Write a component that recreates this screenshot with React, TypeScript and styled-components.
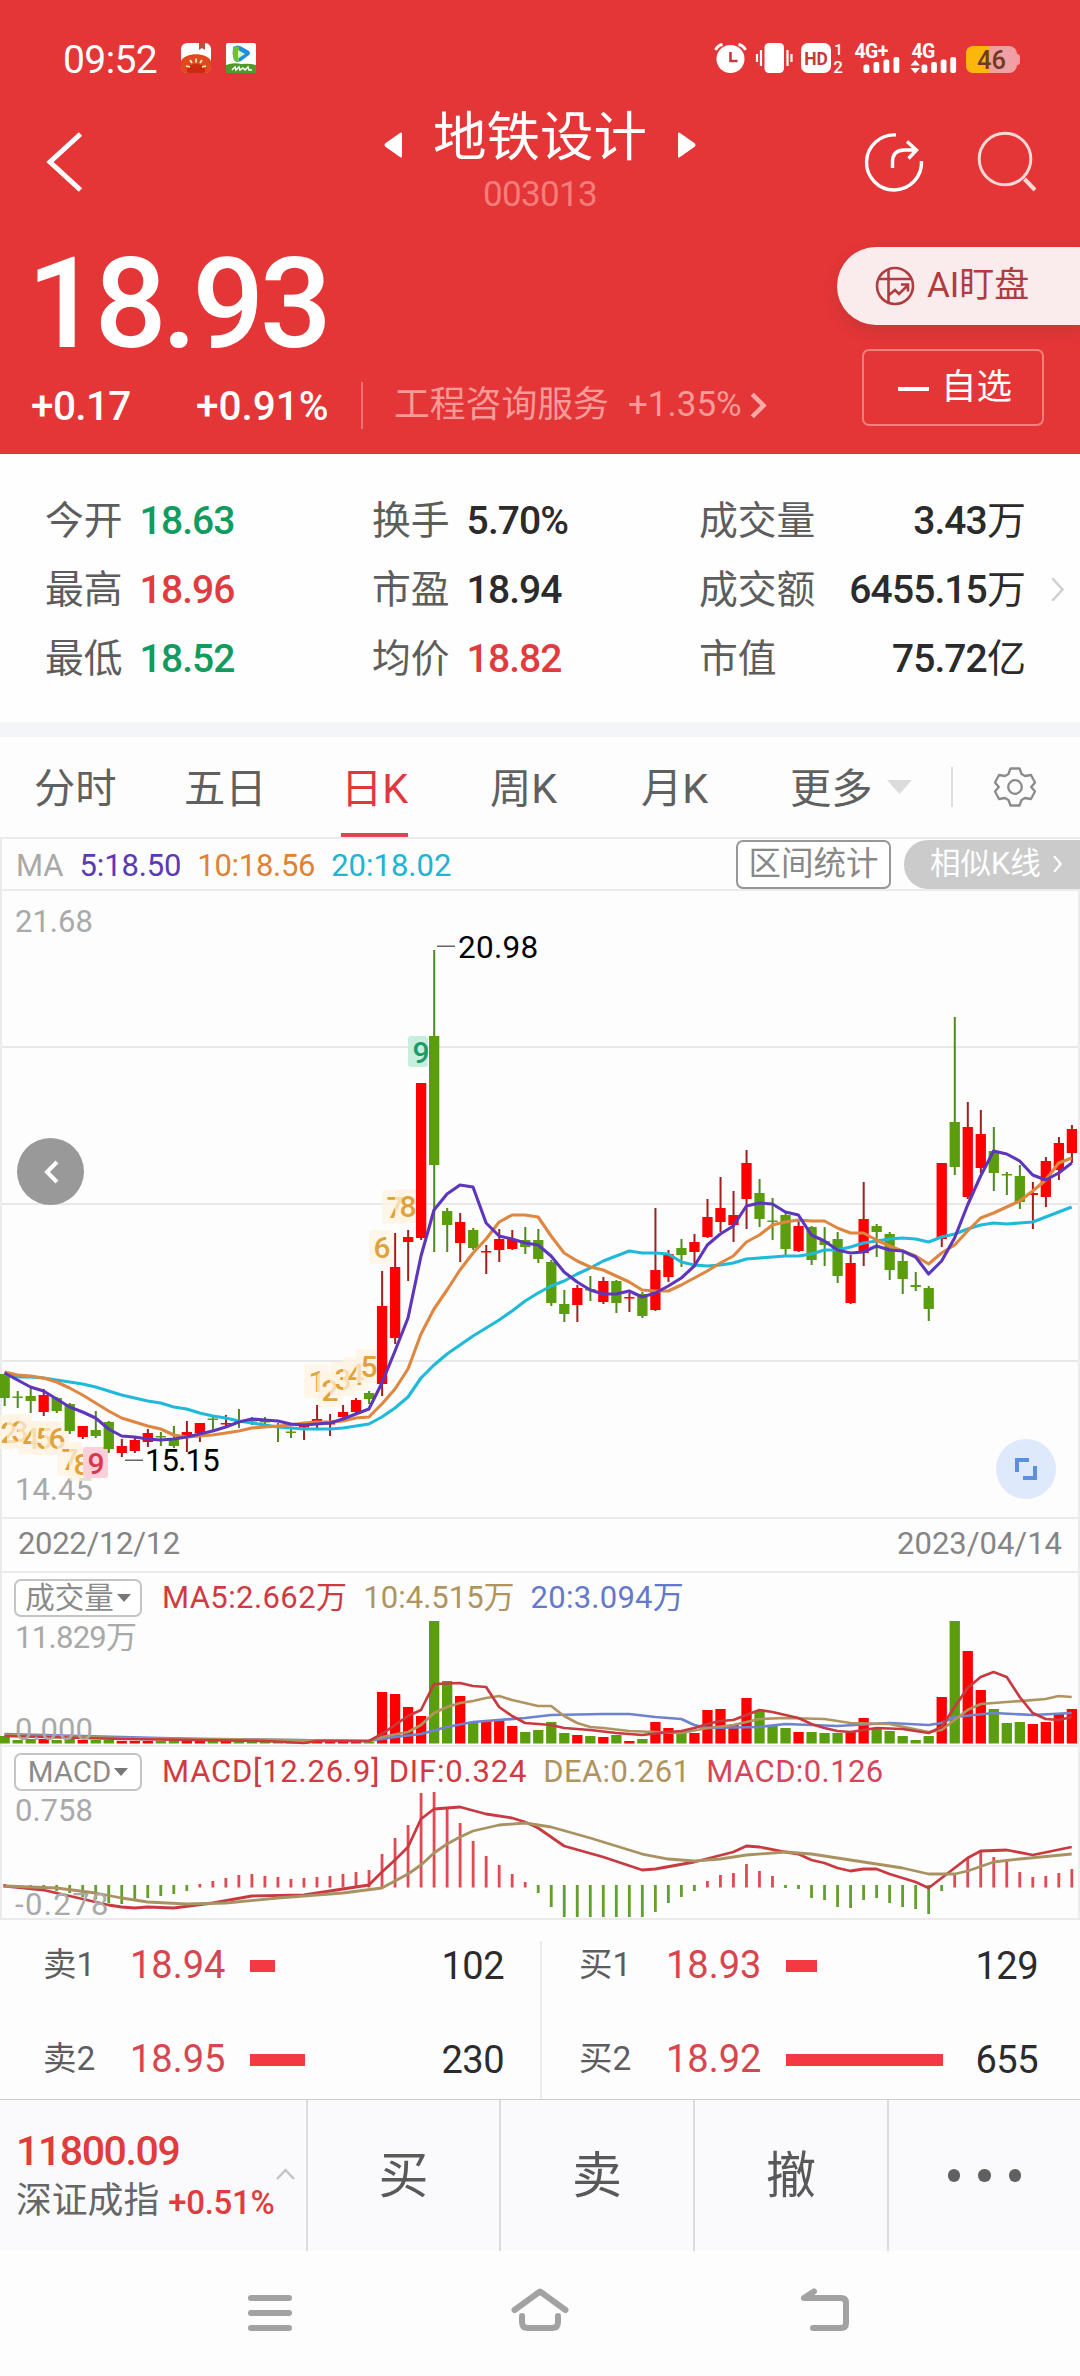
import React from "react";
import styled, { createGlobalStyle, css } from "styled-components";

const RED = "#e43537";
const UP = "#e03c3f";
const DOWN = "#119b5d";
const INK = "#2b2b2b";

const GlobalStyle = createGlobalStyle`
  * { box-sizing: border-box; }
  body { margin: 0; background: #fdfdfd; }
  #root { width: 1080px; }
`;

const Screen = styled.main`
  display: flex;
  flex-direction: column;
  width: 1080px;
  height: 2376px;
  overflow: hidden;
  background: #fdfdfd;
  font-family: Roboto, "Noto Sans CJK SC", sans-serif;
  color: ${INK};
  white-space: nowrap;
`;

interface TextProps {
  $size: number;
  $color?: string;
  $track?: number;
  $weight?: number;
  $lift?: number;
}

const Text = styled.span<TextProps>`
  display: block;
  font-size: ${(p) => p.$size}px;
  line-height: 1.2;
  font-weight: ${(p) => p.$weight ?? 400};
  letter-spacing: ${(p) => p.$track ?? 0}px;
  color: ${(p) => p.$color ?? "inherit"};
  ${(p) => p.$lift && css`margin-top: ${p.$lift}px;`}
`;

/* ---------- header ---------- */

const Header = styled.header`
  height: 454px;
  background: ${RED};
  color: #fff;
`;

const StatusBar = styled.div`
  display: flex;
  align-items: center;
  justify-content: space-between;
  height: 100px;
  padding: 16px 60px 0 63px;
`;

const StatusGroup = styled.div<{ $gap: number }>`
  display: flex;
  align-items: center;
  gap: ${(p) => p.$gap}px;
`;

const TitleBar = styled.div`
  display: grid;
  grid-template-columns: 384px 312px 1fr;
  align-items: center;
  height: 124px;
`;

const BackButton = styled.button`
  border: 0;
  padding: 0 0 0 44px;
  background: none;
  line-height: 0;
  text-align: left;
`;

const TitleGroup = styled.div`
  display: grid;
  grid-template-columns: 18px 1fr 18px;
  justify-items: center;
`;

const Arrow = styled.svg`
  margin-top: 25px;
`;

const TitleText = styled.h1`
  margin: 0;
  padding-top: 2px;
  font-size: 53.5px;
  line-height: 60px;
  height: 64px;
  font-weight: 400;
`;

const Code = styled.div`
  grid-column: 1 / -1;
  height: 48px;
  font-size: 35px;
  line-height: 50px;
  letter-spacing: -0.7px;
  color: #f57e7c;
`;

const TitleActions = styled.div`
  display: flex;
  justify-content: flex-end;
  gap: 52px;
  padding-right: 42px;
`;

const Quote = styled.section`
  display: flex;
  justify-content: space-between;
`;

const Price = styled.div`
  height: 156px;
  padding: 2px 0 0 27px;
  font-size: 127px;
  line-height: 156px;
  font-weight: 500;
  letter-spacing: -4.8px;
`;

const ChangeRow = styled.div`
  display: grid;
  grid-template-columns: 165px 165px 33px 234px 122px 18px;
  align-items: center;
  height: 48px;
  padding-left: 31px;
`;

const Rule = styled.i<{ $h: number; $color: string }>`
  display: block;
  width: 2px;
  height: ${(p) => p.$h}px;
  background: ${(p) => p.$color};
`;

const QuoteActions = styled.div`
  display: flex;
  flex-direction: column;
  align-items: flex-end;
  gap: 24px;
  padding-top: 23px;
`;

const WatchPill = styled.button`
  display: flex;
  align-items: center;
  gap: 12px;
  width: 243px;
  height: 78px;
  padding: 0 0 0 38px;
  border: 0;
  border-radius: 39px 0 0 39px;
  background: #faebec;
  box-shadow: 0 6px 14px rgba(150, 60, 50, 0.3);
  font-family: inherit;
  color: #b03c3f;
`;

const FavButton = styled.button`
  display: flex;
  align-items: center;
  gap: 12px;
  width: 182px;
  height: 77px;
  margin-right: 36px;
  padding: 0 0 0 34px;
  border: 2px solid #f3807e;
  border-radius: 7px;
  background: none;
  font-family: inherit;
  color: #fff;
`;

const Dash = styled.i`
  width: 31px;
  height: 4px;
  margin-top: 3px;
  background: #fff;
`;

/* ---------- stats ---------- */

const Stats = styled.section`
  display: grid;
  grid-template-columns: 327px 327px 326px 1fr;
  grid-template-rows: repeat(3, 69px);
  align-items: center;
  height: 268px;
  padding: 32px 0 0 45px;
  background: #fefefe;
`;

const Stat = styled.dl<{ $spread?: boolean }>`
  display: flex;
  align-items: center;
  gap: 17px;
  margin: 0;
  ${(p) => p.$spread && css`justify-content: space-between; gap: 0;`}
`;

const StatLabel = styled.dt`
  font-size: 38.8px;
  line-height: 46px;
  color: #5d5d5d;
`;

const StatValue = styled.dd<{ $color?: string }>`
  margin: 0;
  font-size: 39px;
  line-height: 46px;
  font-weight: 500;
  letter-spacing: -0.9px;
  color: ${(p) => p.$color ?? INK};
`;

const Unit = styled.span`
  font-weight: 400;
`;

const StatEnd = styled.div`
  display: flex;
  padding-left: 26px;
`;

const Gap = styled.div`
  height: 15px;
  background: #f4f5f8;
`;

/* ---------- tabs ---------- */

const Tabs = styled.nav`
  display: grid;
  grid-template-columns: 150px 157px 149px 151px 149px 97px 64px 43px 1fr;
  height: 100px;
  padding-left: 34px;
  align-items: stretch;
`;

const Tab = styled.div<{ $active?: boolean }>`
  display: flex;
  flex-direction: column;
  justify-content: space-between;
  width: max-content;
  padding-top: 27px;
  font-size: 41.3px;
  line-height: 50px;
  color: ${(p) => (p.$active ? "#e0383f" : "#606060")};
  &::after {
    content: "";
    height: 4px;
    background: ${(p) => (p.$active ? "#d94850" : "transparent")};
  }
`;

const TabAside = styled.div`
  display: flex;
  align-items: center;
`;

/* ---------- chart panes ---------- */

const Legend = styled.div`
  display: flex;
  align-items: center;
  height: 52px;
  padding-left: 14px;
  border-top: 2px solid #ebebeb;
  border-left: 2px solid #ebebeb;
`;

const LegendItems = styled.div`
  display: flex;
  flex: 1;
  gap: 16px;
`;

const RangeButton = styled.button`
  width: 155px;
  height: 49px;
  padding: 0;
  border: 2px solid #979797;
  border-radius: 7px;
  background: #fff;
  font: 32.5px/44px Roboto, "Noto Sans CJK SC", sans-serif;
  color: #888;
`;

const SimilarButton = styled.button`
  display: flex;
  align-items: center;
  gap: 12px;
  width: 176px;
  height: 49px;
  margin-left: 13px;
  padding: 0 0 0 26px;
  border: 0;
  border-radius: 24px 0 0 24px;
  background: #cbcbcb;
  font: 30.5px/44px Roboto, "Noto Sans CJK SC", sans-serif;
  color: #fff;
`;

const Pane = styled.section<{ $h: number }>`
  position: relative;
  height: ${(p) => p.$h}px;
  border-top: 2px solid #ebebeb;
  border-left: 2px solid #ebebeb;
  border-right: 2px solid #ededed;
`;

const Plot = styled.svg`
  position: absolute;
  left: -2px;
  top: -2px;
`;

const PaneHead = styled.div`
  position: relative;
  display: flex;
  align-items: center;
  height: 36px;
  margin: 7px 0 0 12px;
`;

const Picker = styled.button`
  display: flex;
  align-items: center;
  justify-content: center;
  gap: 3px;
  width: 128px;
  height: 38px;
  margin-right: 20px;
  padding: 0;
  border: 2px solid #c4c4c4;
  border-radius: 7px;
  background: #fff;
  font: 29.5px/32px Roboto, "Noto Sans CJK SC", sans-serif;
  color: #8b8b8b;
`;

const AxisMark = styled.span<{ $y: number; $track?: number }>`
  position: absolute;
  left: 13px;
  top: ${(p) => p.$y}px;
  font-size: 31px;
  line-height: 36px;
  letter-spacing: ${(p) => p.$track ?? 0}px;
  color: #a9a9a9;
`;

const RoundButton = styled.button<{ $x: number; $y: number; $d: number; $bg: string }>`
  position: absolute;
  left: ${(p) => p.$x}px;
  top: ${(p) => p.$y}px;
  display: grid;
  place-items: center;
  width: ${(p) => p.$d}px;
  height: ${(p) => p.$d}px;
  padding: 0;
  border: 0;
  border-radius: 50%;
  background: ${(p) => p.$bg};
`;

const Dates = styled.div`
  display: flex;
  justify-content: space-between;
  align-items: center;
  height: 54px;
  padding: 0 16px 2px 16px;
  border: solid #ebebeb;
  border-width: 2px 2px 0 2px;
`;

/* ---------- order book ---------- */

const Book = styled.section`
  display: grid;
  grid-template-columns: 540px 540px;
  height: 181px;
  padding-top: 21px;
  border-top: 2px solid #ebebeb;
`;

const BookSide = styled.div<{ $line?: boolean }>`
  display: flex;
  flex-direction: column;
  padding-left: ${(p) => (p.$line ? 37 : 43)}px;
  border-left: ${(p) => (p.$line ? "2px solid #ebebeb" : "0")};
`;

const BookRow = styled.div`
  display: grid;
  grid-template-columns: 87px 120px 160px 1fr;
  align-items: center;
  height: 49px;
  & + & { margin-top: 45px; }
`;

const DepthBar = styled.i`
  display: block;
  height: 12px;
  background: #f33a42;
`;

const Lots = styled.span<{ $right: number }>`
  padding-right: ${(p) => p.$right}px;
  text-align: right;
  font-size: 38px;
  letter-spacing: -0.5px;
`;

/* ---------- footer ---------- */

const Footer = styled.footer`
  display: grid;
  grid-template-columns: 306px 193px 194px 194px 193px;
  height: 152px;
  border-top: 1px solid #cfcfcf;
  background: #fafafc;
`;

const IndexCell = styled.div`
  position: relative;
  display: flex;
  flex-direction: column;
  gap: 4px;
  padding: 27px 0 0 16px;
`;

const IndexLine = styled.div`
  display: flex;
  align-items: center;
  gap: 9px;
`;

const Caret = styled.svg`
  position: absolute;
  left: 276px;
  top: 68px;
`;

const Action = styled.button`
  display: flex;
  align-items: center;
  justify-content: center;
  gap: 18px;
  padding: 0;
  border: 0;
  border-left: 2px solid #dcdcdc;
  background: none;
  font: 50px/60px Roboto, "Noto Sans CJK SC", sans-serif;
  color: #595959;
`;

const Dot = styled.i`
  width: 12.5px;
  height: 12.5px;
  border-radius: 50%;
  background: #606060;
`;

const SystemNav = styled.div`
  display: flex;
  justify-content: center;
  height: 125px;
  padding-top: 35px;
`;

/* ---------- data ---------- */

// direction, body top, body bottom, high, low
type Candle = ["r" | "g", number, number, number, number];

const candles: Candle[] = [
  ["g", 1374, 1398, 1374, 1406], ["g", 1396.5, 1398, 1391, 1408], ["g", 1396, 1401, 1387, 1413],
  ["r", 1395, 1412, 1389, 1416], ["g", 1398, 1411, 1397, 1413], ["g", 1404, 1431, 1403, 1434],
  ["r", 1426, 1437, 1426, 1439], ["g", 1430, 1436, 1411, 1438], ["g", 1422, 1449, 1421, 1453],
  ["r", 1446, 1453, 1439, 1457], ["r", 1440, 1451, 1436, 1453], ["r", 1433, 1442, 1429, 1447],
  ["g", 1436, 1437.5, 1432, 1446], ["g", 1439, 1446, 1426, 1448], ["r", 1432, 1437, 1421, 1452],
  ["r", 1423, 1433, 1423, 1442], ["g", 1418.5, 1420, 1417, 1432], ["r", 1423, 1424.5, 1415, 1428],
  ["g", 1420, 1421.5, 1409, 1428], ["g", 1420, 1421.5, 1417, 1425], ["g", 1421, 1422.5, 1417, 1424],
  ["g", 1425, 1426.5, 1423, 1442], ["g", 1431.5, 1433, 1428, 1438], ["r", 1426, 1427.5, 1425, 1440],
  ["r", 1419, 1421, 1405, 1428], ["r", 1423, 1424.5, 1414, 1436], ["r", 1412, 1417, 1405, 1418],
  ["r", 1400, 1412, 1398, 1413], ["g", 1393, 1399, 1391, 1404], ["r", 1306, 1384, 1271, 1396],
  ["r", 1267, 1338, 1233, 1344], ["r", 1237, 1242, 1230, 1281], ["r", 1083, 1238, 1083, 1240],
  ["g", 1036, 1165, 950, 1252], ["g", 1211, 1225, 1208, 1252], ["r", 1222, 1243, 1213, 1262],
  ["g", 1230, 1248, 1228, 1250], ["r", 1251, 1252.5, 1245, 1274], ["r", 1239, 1250, 1229, 1262],
  ["r", 1239, 1249, 1230, 1250], ["g", 1240, 1247, 1227, 1254], ["g", 1240, 1259, 1229, 1263],
  ["g", 1262, 1303, 1260, 1306], ["g", 1304, 1314, 1290, 1322], ["r", 1288, 1305, 1285, 1322],
  ["g", 1289, 1290.5, 1276, 1301], ["r", 1281, 1302, 1277, 1304], ["g", 1281, 1303, 1280, 1313],
  ["r", 1297, 1298.5, 1293, 1312], ["g", 1294, 1316, 1292, 1318], ["r", 1270, 1310, 1208, 1311],
  ["r", 1254, 1277, 1250, 1282], ["g", 1248, 1255, 1239, 1267], ["r", 1242, 1252, 1234, 1267],
  ["r", 1217, 1237, 1199, 1238], ["r", 1208, 1222, 1177, 1232], ["r", 1215, 1225, 1191, 1242],
  ["r", 1163, 1199, 1150, 1229], ["g", 1193, 1219, 1179, 1227], ["g", 1220.5, 1222, 1198, 1240],
  ["g", 1215, 1249, 1213, 1255], ["r", 1226, 1251, 1221, 1252], ["g", 1227, 1260, 1226, 1265],
  ["g", 1241, 1245, 1227, 1266], ["g", 1239, 1276, 1232, 1283], ["r", 1263, 1303, 1255, 1304],
  ["r", 1219, 1253, 1182, 1266], ["g", 1226, 1232, 1224, 1257], ["g", 1234, 1270, 1232, 1280],
  ["g", 1261, 1279, 1253, 1294], ["g", 1285, 1287, 1272, 1291], ["g", 1288, 1309, 1286, 1321],
  ["r", 1163, 1239, 1163, 1247], ["g", 1122, 1167, 1017, 1175], ["r", 1127, 1197, 1102, 1199],
  ["r", 1134, 1168, 1110, 1173], ["g", 1151, 1173, 1127, 1191], ["g", 1174, 1175.5, 1172, 1195],
  ["g", 1176, 1202, 1165, 1209], ["r", 1193, 1195, 1182, 1229], ["r", 1161, 1197, 1157, 1207],
  ["r", 1143, 1170, 1137, 1180], ["r", 1129, 1153, 1125, 1163],
];

const ma5 = [
  1373, 1380, 1387, 1391, 1399, 1407, 1412, 1418, 1429, 1436, 1437, 1439, 1440, 1439, 1437, 1434, 1431, 1427, 1422,
  1419, 1420, 1421, 1424, 1425, 1424, 1423, 1419, 1414, 1409, 1383, 1351, 1318, 1256, 1210, 1194, 1185, 1187, 1223,
  1236, 1239, 1243, 1245, 1256, 1272, 1282, 1290, 1294, 1294, 1291, 1297, 1293, 1286, 1278, 1266, 1245, 1234, 1226,
  1206, 1203, 1204, 1212, 1215, 1235, 1241, 1250, 1253, 1252, 1246, 1250, 1251, 1257, 1274, 1261, 1238, 1205, 1176,
  1151, 1154, 1161, 1175, 1180, 1173, 1163,
];

const ma10 = [
  1372, 1375, 1376, 1378, 1382, 1388, 1395, 1403, 1411, 1418, 1422, 1426, 1429, 1435, 1437, 1436, 1435, 1433, 1431,
  1428, 1427, 1426, 1425, 1423, 1422, 1422, 1421, 1418, 1417, 1404, 1389, 1369, 1334, 1309, 1290, 1270, 1253, 1239,
  1222, 1215, 1215, 1217, 1236, 1253, 1261, 1267, 1270, 1276, 1282, 1290, 1291, 1291, 1285, 1278, 1271, 1263, 1256,
  1242, 1235, 1225, 1222, 1220, 1221, 1221, 1228, 1233, 1233, 1240, 1246, 1251, 1256, 1264, 1253, 1245, 1231, 1218,
  1213, 1207, 1201, 1191, 1180, 1163, 1158,
];

const ma20 = [
  1374, 1377, 1377, 1378, 1380, 1382, 1384, 1387, 1391, 1395, 1398, 1401, 1403, 1407, 1409, 1413, 1416, 1418, 1421,
  1423, 1425, 1427, 1428, 1429, 1429, 1429, 1428, 1426, 1424, 1417, 1408, 1397, 1378, 1365, 1354, 1345, 1336, 1328,
  1320, 1311, 1301, 1293, 1286, 1281, 1274, 1268, 1261, 1256, 1251, 1253, 1253, 1254, 1262, 1265, 1266, 1265, 1263,
  1259, 1258, 1257, 1256, 1256, 1254, 1250, 1250, 1247, 1243, 1241, 1239, 1238, 1239, 1242, 1237, 1234, 1229, 1225,
  1223, 1224, 1223, 1222, 1217, 1212, 1207,
];

const volumeTops = [
  1736, 1740, 1739, 1739, 1740, 1739, 1740, 1740, 1740, 1741, 1741, 1741, 1741, 1741, 1741, 1741, 1741, 1741, 1742,
  1742, 1742, 1742, 1742, 1742, 1742, 1742, 1742, 1742, 1742, 1692, 1694, 1707, 1716, 1621, 1681, 1696, 1722, 1721,
  1720, 1726, 1732, 1730, 1722, 1733, 1735, 1736, 1737, 1735, 1741, 1739, 1722, 1728, 1733, 1733, 1710, 1709, 1725,
  1698, 1711, 1726, 1728, 1732, 1732, 1733, 1733, 1731, 1718, 1729, 1731, 1736, 1740, 1736, 1697, 1621, 1651, 1690,
  1709, 1723, 1722, 1724, 1722, 1713, 1709,
];

type Point = [number, number];

const volMa5: Point[] = [
  [0, 1736], [9, 1739], [20, 1741], [23, 1743], [24, 1741], [28, 1741], [29, 1734], [30, 1725], [31, 1716], [32, 1710],
  [33, 1684], [35, 1683], [36, 1686], [37, 1687], [38, 1707], [39, 1716], [40, 1723], [42, 1725], [43, 1728], [45, 1730],
  [47, 1733], [49, 1735], [51, 1732], [52, 1731], [53, 1728], [54, 1724], [55, 1721], [56, 1720], [57, 1715], [58, 1710],
  [59, 1712], [61, 1718], [62, 1724], [63, 1728], [64, 1731], [65, 1732], [67, 1728], [69, 1729], [70, 1731], [71, 1733],
  [72, 1727], [73, 1707], [74, 1688], [75, 1677], [76, 1672], [77, 1677], [78, 1697], [79, 1713], [80, 1719], [81, 1720],
  [82, 1717],
];
const volMa10: Point[] = [
  [0, 1735], [9, 1738], [28, 1741], [29, 1737], [31, 1732], [32, 1725], [33, 1713], [34, 1707], [35, 1703], [36, 1701],
  [37, 1698], [38, 1696], [39, 1700], [41, 1706], [42, 1706], [43, 1716], [44, 1723], [45, 1727], [46, 1728], [48, 1731],
  [50, 1732], [52, 1733], [54, 1728], [56, 1725], [58, 1719], [60, 1718], [63, 1719], [65, 1723], [68, 1724], [71, 1732],
  [72, 1730], [73, 1720], [74, 1710], [75, 1704], [77, 1702], [80, 1699], [81, 1696], [82, 1697],
];
const volMa20: Point[] = [
  [0, 1734], [9, 1737], [15, 1739], [28, 1741], [30, 1737], [32, 1734], [34, 1727], [36, 1722], [40, 1718], [42, 1715],
  [46, 1714], [48, 1714], [50, 1717], [52, 1719], [53, 1725], [54, 1728], [58, 1727], [60, 1724], [64, 1726], [68, 1723],
  [71, 1725], [72, 1723], [73, 1717], [76, 1713], [79, 1715], [82, 1713],
];

const macdEnds = [
  1884, 1888, 1890, 1890, 1891, 1893, 1897, 1899, 1903, 1904, 1901, 1898, 1896, 1894, 1891, 1884, 1881, 1878, 1875,
  1874, 1876, 1877, 1879, 1878, 1877, 1876, 1874, 1872, 1870, 1854, 1838, 1825, 1793, 1792, 1808, 1823, 1841, 1856,
  1865, 1874, 1882, 1893, 1907, 1917, 1917, 1917, 1917, 1917, 1917, 1917, 1912, 1903, 1897, 1891, 1881, 1875, 1873,
  1864, 1871, 1876, 1888, 1889, 1898, 1900, 1907, 1908, 1900, 1898, 1903, 1907, 1909, 1914, 1891, 1874, 1858, 1852,
  1857, 1861, 1872, 1877, 1876, 1873, 1869,
];
const dif: Point[] = [
  [0, 1886], [3, 1890], [5, 1896], [7, 1902], [8, 1905], [9, 1907], [10, 1908], [11, 1907], [13, 1908], [16, 1903],
  [19, 1896], [23, 1895], [25, 1891], [28, 1885], [29, 1872], [30, 1860], [31, 1847], [32, 1819], [33, 1809], [34, 1808],
  [35, 1807], [37, 1814], [39, 1818], [40, 1822], [41, 1828], [42, 1837], [43, 1846], [46, 1857], [49, 1870], [50, 1869],
  [53, 1862], [56, 1852], [57, 1846], [58, 1847], [60, 1852], [61, 1854], [62, 1860], [63, 1863], [64, 1868], [65, 1871],
  [66, 1869], [67, 1869], [68, 1874], [70, 1882], [71, 1888], [72, 1878], [73, 1868], [74, 1858], [75, 1851], [77, 1850],
  [79, 1855], [82, 1847],
];
const dea: Point[] = [
  [0, 1886], [4, 1888], [7, 1893], [9, 1898], [11, 1902], [14, 1904], [17, 1903], [21, 1898], [26, 1893], [29, 1888],
  [31, 1874], [32, 1865], [33, 1853], [34, 1844], [35, 1837], [36, 1831], [38, 1825], [40, 1823], [42, 1827], [45, 1838],
  [49, 1854], [51, 1859], [53, 1861], [55, 1859], [57, 1855], [60, 1852], [62, 1854], [66, 1862], [69, 1868], [71, 1874],
  [73, 1874], [74, 1871], [76, 1862], [78, 1859], [82, 1854],
];

// digit, x, y, kind
const countMarks: [string, number, number, "n" | "r" | "g"][] = [
  ["2", 9, 1432, "n"], ["3", 20, 1431, "n"], ["4", 31, 1438, "n"], ["5", 44, 1438, "n"], ["6", 57, 1438, "n"],
  ["7", 70, 1459, "n"], ["8", 82, 1464, "n"], ["9", 96, 1463, "r"],
  ["1", 317, 1381, "n"], ["2", 330, 1390, "n"], ["3", 343, 1379, "n"], ["4", 356, 1374, "n"], ["5", 369, 1366, "n"],
  ["6", 382, 1247, "n"], ["7", 395, 1207, "n"], ["8", 408, 1206, "n"], ["9", 421, 1052, "g"],
];
const markColor = { n: "#dfa23c", r: "#d63a52", g: "#1b9c68" };
const markBack = { n: "#fff3e2", r: "#fbd0d8", g: "#c8eedd" };

const sx = (i: number) => 4.5 + 13.015 * i;
const dense = (ys: number[]) => ys.map((y, i) => `${sx(i).toFixed(1)},${y}`).join(" ");
const sparse = (ps: Point[]) => ps.map(([i, y]) => `${sx(i).toFixed(1)},${y}`).join(" ");

const Line = ({ points, color, width = 3.1 }: { points: string; color: string; width?: number }) => (
  <polyline points={points} fill="none" stroke={color} strokeWidth={width} strokeLinejoin="round" />
);

const PricePlot = () => (
  <Plot width="1080" height="628" viewBox="0 889 1080 628">
    {[1047, 1204, 1361].map((y) => (
      <rect key={y} x="2" y={y - 1} width="1076" height="2" fill="#e8e8e8" />
    ))}
    <text x="15" y="932" fontSize="31" fill="#a9a9a9">21.68</text>
    <text x="15" y="1500" fontSize="31" fill="#a9a9a9">14.45</text>
    {countMarks.map(([d, x, y, k], n) => (
      <g key={n}>
        <rect
          x={x - 13}
          y={y - (k === "n" ? 17 : 16)}
          width={k === "g" ? 20 : 25}
          height={k === "n" ? 34 : 31}
          rx="3"
          fill={markBack[k]}
          opacity={k === "n" ? 0.72 : 1}
        />
        <text x={x} y={y + 11} fontSize="30" fontWeight="500" textAnchor="middle" fill={markColor[k]}>{d}</text>
      </g>
    ))}
    {candles.map(([c, top, bottom, high, low], i) => (
      <g key={i}>
        <rect x={sx(i) - 0.8} y={high} width="2" height={low - high} fill={c === "r" ? "#a02020" : "#4e8a1c"} />
        <rect x={sx(i) - 5} y={top} width="10.3" height={bottom - top} fill={c === "r" ? "#fe0000" : "#5a9e0e"} />
      </g>
    ))}
    <Line points={dense(ma20)} color="#1fbad9" />
    <Line points={dense(ma10)} color="#df8640" />
    <Line points={dense(ma5)} color="#5d36bb" />
    <rect x="437" y="945.5" width="18" height="1.5" fill="#666" />
    <text x="458" y="958" fontSize="31.5" fill="#000" letterSpacing="0.3">20.98</text>
    <rect x="125" y="1459.5" width="18" height="1.5" fill="#666" />
    <text x="145" y="1471" fontSize="31" fill="#000" letterSpacing="-0.8">15.15</text>
  </Plot>
);

const VolumePlot = () => (
  <Plot width="1080" height="174" viewBox="0 1571 1080 174">
    {volumeTops.map((y, i) => (
      <rect key={i} x={sx(i) - 5} y={y} width="10.3" height={1743.5 - y} fill={candles[i][0] === "r" ? "#fe0000" : "#5a9e0e"} />
    ))}
    <Line points={sparse(volMa20)} color="#6d83d0" width={2.7} />
    <Line points={sparse(volMa10)} color="#b09460" width={2.7} />
    <Line points={sparse(volMa5)} color="#c63a40" width={2.7} />
  </Plot>
);

const MacdPlot = () => (
  <Plot width="1080" height="173" viewBox="0 1745 1080 173">
    {macdEnds.map((y, i) => {
      const up = y < 1886;
      return (
        <rect
          key={i}
          x={sx(i) - 1.3}
          y={up ? y : 1885}
          width="2.8"
          height={up ? 1887.5 - y : y - 1885}
          fill={up ? "#e04a55" : "#639f2c"}
        />
      );
    })}
    <Line points={sparse(dif)} color="#c93a40" width={2.8} />
    <Line points={sparse(dea)} color="#a99262" width={2.8} />
  </Plot>
);

/* ---------- icons ---------- */

const TomatoIcon = () => (
  <svg width="30" height="30" viewBox="0 0 30 30">
    <rect width="30" height="30" rx="6" fill="#fff" />
    <path d="M18 0h6v7l-3-2-3 2z" fill="#b9503c" />
    <path d="M0 18C4 9 26 9 30 18v6q0 6-6 6H6q-6 0-6-6z" fill="#e0491c" />
    <ellipse cx="15" cy="27" rx="9" ry="6" fill="#c92a10" />
    <path d="M15 15.500v4M9 17l2 3M21 17l-2 3M5 23l4 1M25 23l-4 1" stroke="#fff0d0" strokeWidth="1.7" />
  </svg>
);

const VideoIcon = () => (
  <svg width="30" height="30" viewBox="0 0 30 30">
    <rect width="30" height="30" rx="2" fill="#fff" />
    <path d="M7 4q5-3 9 0l7 4q2 2.500 0 4l-8 6q-5 2-7-1-2-6-1-13z" fill="#1f8fe0" />
    <path d="M7 5q2-3 6-1v14q-3 2-5-1-2-6-1-12z" fill="#6fc12e" />
    <path d="M12 7l7 4-7 4.500z" fill="#d8f7c0" />
    <path d="M0 22q7-3 15-1 8-1 15 1v8H0z" fill="#4f9a28" />
    <path d="M6 27l3-3 1 3 3-3 1 3 3-2 2 2 3-3 1 3h3" stroke="#fff" strokeWidth="1.5" fill="none" />
  </svg>
);

const StatusIcons = () => (
  <svg width="307" height="34" viewBox="713 41 307 34" fill="#fff">
    <circle cx="730.500" cy="59" r="14" />
    <path d="M715.500 50q2-4.500 7-5.500M745.500 50q-2-4.500-7-5.500" stroke="#fff" strokeWidth="3" fill="none" />
    <path d="M730.500 52v9h7" stroke="#c23a3c" strokeWidth="2.600" fill="none" />
    <rect x="764.500" y="43" width="19.500" height="30" rx="4.500" />
    <path d="M761 50v16M757 54v8M787.500 50v16M791.500 54v8" stroke="#fff" strokeWidth="2.200" />
    <rect x="801" y="43" width="30" height="30" rx="7" />
    <text x="816" y="64.500" fontSize="17.500" fontWeight="700" textAnchor="middle" fill="#c23a3c">HD</text>
    <text x="838.500" y="54.500" fontSize="15" fontWeight="500" textAnchor="middle">1</text>
    <text x="838" y="73" fontSize="17" fontWeight="500" textAnchor="middle">2</text>
    <text x="854.500" y="57.500" fontSize="19.500" fontWeight="700" letterSpacing="-0.600">4G+</text>
    <text x="911.500" y="57.500" fontSize="19.500" fontWeight="700" letterSpacing="-0.600">4G</text>
    {[0, 1, 2, 3].map((n) => (
      <rect key={n} x={863.5 + n * 10} y={64.5 - n * 2.5} width="5.8" height={8.5 + n * 2.5} rx="2" />
    ))}
    {[0, 1, 2, 3].map((n) => (
      <rect key={n} x={921.5 + n * 9.6} y={64.5 - n * 2.5} width="5.8" height={8.5 + n * 2.5} rx="2" />
    ))}
    <path d="M910.500 65.500l4.700-5.500 4.700 5.500zM910.500 68l4.700 5.500 4.700-5.500z" />
    <rect x="966" y="46" width="51" height="27" rx="8" fill="#f0a0a4" />
    <rect x="1014" y="54" width="6" height="11" rx="3" fill="#f0a0a4" />
    <path d="M974 46h15v27h-15q-8 0-8-8V54q0-8 8-8z" fill="#fdb70b" />
    <text x="991.500" y="68.500" fontSize="25.500" textAnchor="middle" fill="#6e3b22" fontWeight="500">46</text>
  </svg>
);

const GearIcon = () => (
  <svg width="42" height="42" viewBox="-21 -21 42 42" fill="none" stroke="#8b8b8b" strokeWidth="2.300" strokeLinejoin="round">
    <path d="M-4.500-18.500h9l2 5.500 3.500 2 6-1 4 7.500-3.800 4.500 3.800 4.500-4 7.500-6-1-3.500 2-2 5.500h-9l-2-5.500-3.500-2-6 1-4-7.500 3.800-4.500-3.800-4.500 4-7.500 6 1 3.500-2z" />
    <circle r="6.800" />
  </svg>
);

const Chevron = ({ w, h, color, stroke }: { w: number; h: number; color: string; stroke: number }) => (
  <svg width={w} height={h} viewBox={`0 0 ${w} ${h}`} fill="none" stroke={color} strokeWidth={stroke}>
    <path d={`M${stroke / 2} ${stroke / 2}L${w - stroke} ${h / 2}L${stroke / 2} ${h - stroke / 2}`} />
  </svg>
);

const DownMark = ({ w, h, color }: { w: number; h: number; color: string }) => (
  <svg width={w} height={h} viewBox={`0 0 ${w} ${h}`}>
    <path d={`M0 0H${w}L${w / 2} ${h}Z`} fill={color} />
  </svg>
);

/* ---------- page ---------- */

interface StatItem {
  label: string;
  value: string;
  unit?: string;
  color?: string;
}

const stats: StatItem[][] = [
  [{ label: "今开", value: "18.63", color: DOWN }, { label: "换手", value: "5.70%" }, { label: "成交量", value: "3.43", unit: "万" }],
  [{ label: "最高", value: "18.96", color: UP }, { label: "市盈", value: "18.94" }, { label: "成交额", value: "6455.15", unit: "万" }],
  [{ label: "最低", value: "18.52", color: DOWN }, { label: "均价", value: "18.82", color: UP }, { label: "市值", value: "75.72", unit: "亿" }],
];

const asks = [
  { label: "卖1", price: "18.94", bar: 25, lots: 102 },
  { label: "卖2", price: "18.95", bar: 55, lots: 230 },
];
const bids = [
  { label: "买1", price: "18.93", bar: 31, lots: 129 },
  { label: "买2", price: "18.92", bar: 157, lots: 655 },
];

const BookRows = ({ rows, right }: { rows: typeof asks; right: number }) => (
  <>
    {rows.map((r) => (
      <BookRow key={r.label}>
        <Text $size={33.5} $color="#5d5d5d">{r.label}</Text>
        <Text $size={38} $color="#d9454e">{r.price}</Text>
        <DepthBar style={{ width: r.bar }} />
        <Lots $right={right}>{r.lots}</Lots>
      </BookRow>
    ))}
  </>
);

export default function App() {
  return (
    <Screen>
      <GlobalStyle />
      <Header>
        <StatusBar>
          <StatusGroup $gap={24}>
            <Text $size={39} $track={-0.6} $lift={4}>09:52</Text>
            <StatusGroup $gap={15}>
              <TomatoIcon />
              <VideoIcon />
            </StatusGroup>
          </StatusGroup>
          <StatusIcons />
        </StatusBar>
        <TitleBar>
          <BackButton>
            <svg width="40" height="62" viewBox="0 0 40 62" fill="none" stroke="#fff" strokeWidth="5">
              <path d="M36.500 3L6 31l30.500 28" />
            </svg>
          </BackButton>
          <TitleGroup>
            <Arrow width="18" height="28" viewBox="0 0 18 28" fill="#fff"><path d="M18 2v24q-1 1-2 0L1 15.500q-1-1.500 0-3L16 2q1-1 2 0z" /></Arrow>
            <TitleText>地铁设计</TitleText>
            <Arrow width="18" height="28" viewBox="0 0 18 28" fill="#fff"><path d="M0 2v24q1 1 2 0L17 15.500q1-1.500 0-3L2 2Q1 1 0 2z" /></Arrow>
            <Code>003013</Code>
          </TitleGroup>
          <TitleActions>
            <svg width="60" height="62" viewBox="864 131 60 62" fill="none" stroke="#fff" strokeWidth="3.400">
              <path d="M896 135a27.500 27.500 0 1 0 25.500 26" />
              <path d="M892.500 168v-6q0-12 12-12h12M907 141.500l9.500 8.500-8 8.500" />
            </svg>
            <svg width="62" height="62" viewBox="976 131 62 62" fill="none" stroke="#ffd9d6" strokeWidth="3">
              <circle cx="1005" cy="159" r="25.800" />
              <path d="M1024.500 179l10.500 11" strokeWidth="4" />
            </svg>
          </TitleActions>
        </TitleBar>
        <Quote>
          <div>
            <Price>18.93</Price>
            <ChangeRow>
              <Text $size={40.5} $weight={500} $track={-0.6} $lift={2}>+0.17</Text>
              <Text $size={40.5} $weight={500} $track={0} $lift={2}>+0.91%</Text>
              <Rule $h={47} $color="#ef7473" />
              <Text $size={35.8} $color="#f89b98">工程咨询服务</Text>
              <Text $size={35} $color="#f89b98" $track={0}>+1.35%</Text>
              <Chevron w={18} h={27} color="#fbaaa7" stroke={4.5} />
            </ChangeRow>
          </div>
          <QuoteActions>
            <WatchPill>
              <svg width="40" height="40" viewBox="-20 -20 40 40" fill="none" stroke="#b03c3f" strokeWidth="2.600">
                <circle r="18" />
                <path d="M-6.500-17v34M-17-7h34M-6 9l6-5 4 4 9-9M6-1.500h7v7" />
              </svg>
              <Text $size={35} $color="#b03c3f">AI盯盘</Text>
            </WatchPill>
            <FavButton>
              <Dash />
              <Text $size={35.5}>自选</Text>
            </FavButton>
          </QuoteActions>
        </Quote>
      </Header>

      <Stats>
        {stats.map((row, r) => (
          <React.Fragment key={r}>
            {row.map((s, c) => (
              <Stat key={s.label} $spread={c === 2}>
                <StatLabel>{s.label}</StatLabel>
                <StatValue $color={s.color}>{s.value}{s.unit && <Unit>{s.unit}</Unit>}</StatValue>
              </Stat>
            ))}
            <StatEnd>
              {r === 1 && <Chevron w={14} h={25} color="#cfcfcf" stroke={2.5} />}
            </StatEnd>
          </React.Fragment>
        ))}
      </Stats>
      <Gap />

      <Tabs>
        <Tab>分时</Tab>
        <Tab>五日</Tab>
        <Tab $active>日K</Tab>
        <Tab>周K</Tab>
        <Tab>月K</Tab>
        <Tab>更多</Tab>
        <TabAside><DownMark w={25} h={14} color="#dcdcdc" /></TabAside>
        <TabAside><Rule $h={40} $color="#dedede" /></TabAside>
        <TabAside><GearIcon /></TabAside>
      </Tabs>

      <Legend>
        <LegendItems>
          <Text $size={31} $lift={3} $color="#a9a9a9">MA</Text>
          <Text $size={31} $lift={3} $track={-0.15} $color="#5b3ab5">5:18.50</Text>
          <Text $size={31} $lift={3} $track={-0.3} $color="#df8136">10:18.56</Text>
          <Text $size={31} $lift={3} $color="#22b3d3">20:18.02</Text>
        </LegendItems>
        <RangeButton>区间统计</RangeButton>
        <SimilarButton>
          相似K线
          <Chevron w={10} h={18} color="#fff" stroke={2.2} />
        </SimilarButton>
      </Legend>

      <Pane $h={628}>
        <PricePlot />
        <RoundButton $x={15} $y={247} $d={67} $bg="#999">
          <svg width="18" height="32" viewBox="0 0 18 32" fill="none" stroke="#fff" strokeWidth="4"><path d="M15 6L5 16l10 10" /></svg>
        </RoundButton>
        <RoundButton $x={994} $y={548} $d={60} $bg="#dee9fb">
          <svg width="22" height="22" viewBox="0 0 22 22" fill="none" stroke="#5b8fe0" strokeWidth="4">
            <path d="M2 14V2h12M20 8v12H8" />
          </svg>
        </RoundButton>
      </Pane>
      <Dates>
        <Text $size={31} $color="#858585" $track={-0.3}>2022/12/12</Text>
        <Text $size={31} $color="#858585" $track={0}>2023/04/14</Text>
      </Dates>

      <Pane $h={174}>
        <VolumePlot />
        <PaneHead>
          <Picker>成交量<DownMark w={14} h={8} color="#777" /></Picker>
          <LegendItems>
            <Text $size={31} $track={0.4} $color="#cf3b42">MA5:2.662万</Text>
            <Text $size={31} $track={0} $color="#b09460">10:4.515万</Text>
            <Text $size={31} $track={0.25} $color="#6479c9">20:3.094万</Text>
          </LegendItems>
        </PaneHead>
        <AxisMark $y={47} $track={-0.7}>11.829万</AxisMark>
        <AxisMark $y={139}>0.000</AxisMark>
      </Pane>

      <Pane $h={173}>
        <MacdPlot />
        <PaneHead>
          <Picker>MACD<DownMark w={14} h={8} color="#777" /></Picker>
          <LegendItems>
            <Text $size={31} $track={0.8} $color="#cf3b42">MACD[12.26.9] DIF:0.324</Text>
            <Text $size={31} $track={0.4} $color="#b09460">DEA:0.261</Text>
            <Text $size={31} $track={0.4} $color="#d6455a">MACD:0.126</Text>
          </LegendItems>
        </PaneHead>
        <AxisMark $y={46}>0.758</AxisMark>
        <AxisMark $y={140} $track={1.4}>-0.278</AxisMark>
      </Pane>

      <Book>
        <BookSide><BookRows rows={asks} right={36} /></BookSide>
        <BookSide $line><BookRows rows={bids} right={42} /></BookSide>
      </Book>

      <Footer>
        <IndexCell>
          <Text $size={41} $weight={500} $color="#e03c3c" $track={-1.4}>11800.09</Text>
          <IndexLine>
            <Text $size={35.8} $color="#666">深证成指</Text>
            <Text $size={33} $weight={500} $color="#e03c3c" $track={-0.3} $lift={3}>+0.51%</Text>
          </IndexLine>
          <Caret width="19" height="12" viewBox="0 0 19 12" fill="none" stroke="#c4c4c4" strokeWidth="2.500"><path d="M1 11l8.500-9L18 11" /></Caret>
        </IndexCell>
        <Action>买</Action>
        <Action>卖</Action>
        <Action>撤</Action>
        <Action><Dot /><Dot /><Dot /></Action>
      </Footer>

      <SystemNav>
        <svg width="620" height="50" viewBox="230 2286 620 50" fill="none" stroke="#a2a2a2" strokeWidth="6" strokeLinecap="round" strokeLinejoin="round">
          <path d="M251 2298h38M251 2313h38M251 2328h38" />
          <path d="M514.500 2310L540 2291.500 565.500 2310M522 2316v6q0 6 6 6h24q6 0 6-6v-6" />
          <path d="M814 2291.500l-10 6.500h37q5 0 5 5v20q0 5-5 5h-28" />
        </svg>
      </SystemNav>
    </Screen>
  );
}
